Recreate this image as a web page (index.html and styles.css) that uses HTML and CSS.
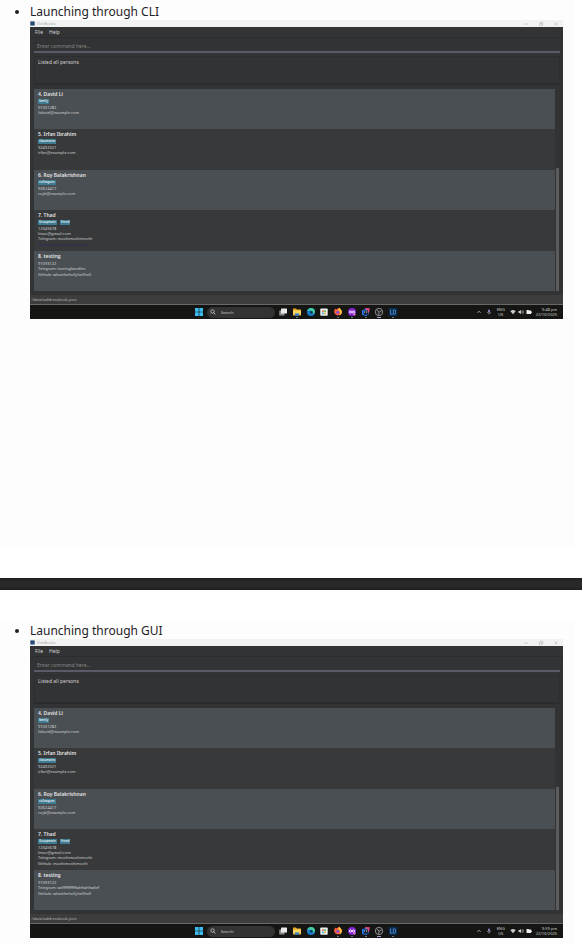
FILE: index.html
```html
<!DOCTYPE html>
<html lang="en">
<head>
<meta charset="utf-8">
<meta name="viewport" content="width=device-width, initial-scale=1">
<title>Launching</title>
<link rel="stylesheet" href="styles.css">
</head>
<body>
<svg class="sprite" aria-hidden="true">
  <symbol id="windows" viewBox="0 0 8 8"><path fill="#3cbcf0" d="M0 0h3.7v3.7H0zM4.3 0H8v3.7H4.3zM0 4.3h3.7V8H0zM4.3 4.3H8V8H4.3z"/></symbol>
  <symbol id="lens" viewBox="0 0 6 6"><circle cx="2.5" cy="2.5" r="1.7" fill="none" stroke="#ddd" stroke-width=".7"/><path d="M3.7 3.7L5.4 5.4" stroke="#ddd" stroke-width=".8"/></symbol>
  <symbol id="tasks" viewBox="0 0 10 10"><rect x="1.2" y="3.4" width="5.4" height="5" rx=".5" fill="#8b8b8b"/><rect x="3" y="1.4" width="6" height="5" rx=".5" fill="#e9e9e9"/></symbol>
  <symbol id="folder" viewBox="0 0 10 10"><path fill="#e9a820" d="M1 1.6h3l1 1h4v6H1z"/><path fill="#ffd561" d="M1 3.5h8v4H1z"/><path fill="#2c83d0" d="M2.8 6.4h4.4v2.2H2.8z"/></symbol>
  <symbol id="edge" viewBox="0 0 10 10"><circle cx="5" cy="5" r="4" fill="#1679c9"/><path fill="#43cfa0" d="M1.2 4.4C1.8 2 3.3 1 5 1c2.400 0 4 1.600 4 3.600C9 6 8 6.800 6.600 6.600 7 4.800 5.600 3.400 4 3.400c-1.200 0-2.200.4-2.800 1z"/><circle cx="5.5" cy="5.300" r="1.300" fill="#123450"/></symbol>
  <symbol id="store" viewBox="0 0 10 10"><rect x="1.300" y="1.500" width="7.400" height="7.300" rx=".8" fill="#ecf0ef"/><path fill="#e77748" d="M3 3.300h1.800v1.800H3z"/><path fill="#65b66f" d="M5.200 3.300H7v1.800H5.200z"/><path fill="#4aa7df" d="M3 5.500h1.800v1.800H3z"/><path fill="#e5bd47" d="M5.200 5.500H7v1.800H5.200z"/></symbol>
  <symbol id="firefox" viewBox="0 0 10 10"><path fill="#ff603b" d="M1.400 3l1-1.500.7 1L5 1.400 6.200.8C7 2 8.800 2.800 8.900 5A3.900 3.900 0 1 1 1.400 3z"/><path fill="#ffc33c" d="M6.200.8C7 2 8.800 2.800 8.900 5c0 1.500-.9 2.700-2.100 3.400C7.600 6 6.800 4 5 3z"/><circle cx="4.800" cy="5.300" r="1.600" fill="#8850c5"/></symbol>
  <symbol id="purple" viewBox="0 0 10 10"><circle cx="5" cy="5" r="4" fill="#8525d5"/><path fill="none" stroke="#fff" stroke-width=".9" d="M5 5C4 3.500 2.400 3.600 2.400 5S4 6.500 5 5s2.600-1.500 2.600 0S6 6.500 5 5"/><circle cx="7.400" cy="7.400" r="1.100" fill="#ef82c7"/></symbol>
  <symbol id="idea" viewBox="0 0 10 10"><path fill="#e54886" d="M4 1l4.800.3L8 6 5 5z"/><path fill="#227cf0" d="M1 3.300L5 2l3 5-2.500 2L1 8z"/><path fill="#111827" d="M2.700 3.500H7v4.200H2.700z"/><path stroke="#d6e6ff" stroke-width=".6" d="M3.500 4.200v1.700M4.800 4.200h1v1.700h-1"/></symbol>
  <symbol id="obs" viewBox="0 0 10 10"><circle cx="5" cy="5" r="3.700" fill="#202020" stroke="#b4b4b4" stroke-width=".7"/><path fill="none" stroke="#b4b4b4" stroke-width=".7" d="M5 5.200L3 2.800M5 5.200l2.700-1.500M5 5.200L4.600 8.200"/></symbol>
  <symbol id="devbooks" viewBox="0 0 10 10"><rect x=".8" y="1" width="8.400" height="8" fill="#092a51"/><path fill="none" stroke="#5998d2" stroke-width=".8" d="M2.600 2.500v4.700h2M5.300 2.800h1.200q1 0 1 1v2.400q0 1-1 1H5.300z"/></symbol>
  <symbol id="chevron" viewBox="0 0 6 6"><path fill="none" stroke="#ccc" stroke-width=".7" d="M1.300 3.700L3 2.300l1.700 1.400"/></symbol>
  <symbol id="mic" viewBox="0 0 6 6"><rect x="2.100" y=".6" width="1.800" height="3" rx=".9" fill="#8e91cf"/><path fill="none" stroke="#bbb" stroke-width=".5" d="M1.300 2.800q.2 1.700 1.700 1.700t1.700-1.700M3 4.500v1"/></symbol>
  <symbol id="wifi" viewBox="0 0 6 6"><path fill="#ccc" d="M.4 2.200Q3-.1 5.600 2.200L3 5.300z"/></symbol>
  <symbol id="sound" viewBox="0 0 6 6"><path fill="#ccc" d="M.5 2.100h1L3 .9v4.200L1.500 3.900h-1z"/><path fill="none" stroke="#ccc" stroke-width=".6" d="M3.800 1.900q.9 1.100 0 2.200M4.700 1q1.500 2 0 4"/></symbol>
  <symbol id="battery" viewBox="0 0 6 6"><path fill="#eee" d="M.5 1h2l.6.6h2v.9h.7v1.600h-.7V5H.5z"/></symbol>
  <symbol id="minimise" viewBox="0 0 6 6"><path stroke="#aaa" stroke-width=".5" d="M1 3h4"/></symbol>
  <symbol id="restore" viewBox="0 0 6 6"><path fill="none" stroke="#aaa" stroke-width=".5" d="M1.500 2.300h2.400v2.400H1.500zM2.300 2.200v-.9h2.500v2.500H4"/></symbol>
  <symbol id="close" viewBox="0 0 6 6"><path stroke="#aaa" stroke-width=".5" d="M1.500 1.500l3 3M4.500 1.500l-3 3"/></symbol>
</svg>

<main>
<section class="sheet">
  <ul class="steps"><li>Launching through CLI
    <div class="desktop">
      <header class="titlebar"><svg class="logo"><use href="#devbooks"/></svg><span>DevBooks</span>
        <div class="window-buttons"><button aria-label="Minimise"><svg><use href="#minimise"/></svg></button><button aria-label="Restore"><svg><use href="#restore"/></svg></button><button aria-label="Close"><svg><use href="#close"/></svg></button></div>
      </header>
      <nav class="menu"><button>File</button><button>Help</button></nav>
      <div class="command"><input type="text" aria-label="Command" placeholder="Enter command here..."></div>
      <div class="result">Listed all persons</div>
      <div class="list">
        <div class="people">
          <article><h2>4. David Li</h2><div class="tags"><span>family</span></div><p>91031282</p><p>lidavid@example.com</p></article>
          <article><h2>5. Irfan Ibrahim</h2><div class="tags"><span>classmates</span></div><p>92492021</p><p>irfan@example.com</p></article>
          <article><h2>6. Roy Balakrishnan</h2><div class="tags"><span>colleagues</span></div><p>92624417</p><p>royb@example.com</p></article>
          <article><h2>7. Thad</h2><div class="tags"><span>Groupmate</span><span>friend</span></div><p>12345678</p><p>lmao@gmail.com</p><p class="handle">Telegram: moshimoshimochi</p><p class="handle visited">Github: moshimoshimochi</p></article>
          <article><h2>8. testing</h2><p>91093122</p><p class="handle">Telegram: testinghandles</p><p class="handle">Github: whatthehollyhellhell</p></article>
        </div>
        <div class="track"><div class="thumb"></div></div>
      </div>
      <footer class="status">.\data\addressbook.json</footer>
      <div class="taskbar">
        <div class="apps">
          <button class="start" aria-label="Start"><svg><use href="#windows"/></svg></button>
          <label class="search"><svg><use href="#lens"/></svg><input type="text" aria-label="Search" placeholder="Search"></label>
          <button aria-label="Task view"><svg><use href="#tasks"/></svg></button>
          <button class="open" aria-label="Files"><svg><use href="#folder"/></svg></button>
          <button aria-label="Edge"><svg><use href="#edge"/></svg></button>
          <button aria-label="Store"><svg><use href="#store"/></svg></button>
          <button class="open" aria-label="Firefox"><svg><use href="#firefox"/></svg></button>
          <button class="open" aria-label="Editor"><svg><use href="#purple"/></svg></button>
          <button class="open" aria-label="IDE"><svg><use href="#idea"/></svg></button>
          <button class="open active" aria-label="Recorder"><svg><use href="#obs"/></svg></button>
          <button class="open" aria-label="DevBooks"><svg><use href="#devbooks"/></svg></button>
        </div>
        <div class="tray"><svg><use href="#chevron"/></svg><svg><use href="#mic"/></svg><span class="language">ENG<br>US</span><div class="system"><svg><use href="#wifi"/></svg><svg><use href="#sound"/></svg><svg><use href="#battery"/></svg></div><time>9:48 pm<br>22/10/2025</time></div>
      </div>
    </div>
  </li></ul>
</section>
<div class="page-break"></div>
<section class="sheet last">
  <ul class="steps"><li>Launching through GUI
    <div class="desktop">
      <header class="titlebar"><svg class="logo"><use href="#devbooks"/></svg><span>DevBooks</span>
        <div class="window-buttons"><button aria-label="Minimise"><svg><use href="#minimise"/></svg></button><button aria-label="Restore"><svg><use href="#restore"/></svg></button><button aria-label="Close"><svg><use href="#close"/></svg></button></div>
      </header>
      <nav class="menu"><button>File</button><button>Help</button></nav>
      <div class="command"><input type="text" aria-label="Command" placeholder="Enter command here..."></div>
      <div class="result">Listed all persons</div>
      <div class="list">
        <div class="people">
          <article><h2>4. David Li</h2><div class="tags"><span>family</span></div><p>91031282</p><p>lidavid@example.com</p></article>
          <article><h2>5. Irfan Ibrahim</h2><div class="tags"><span>classmates</span></div><p>92492021</p><p>irfan@example.com</p></article>
          <article><h2>6. Roy Balakrishnan</h2><div class="tags"><span>colleagues</span></div><p>92624417</p><p>royb@example.com</p></article>
          <article><h2>7. Thad</h2><div class="tags"><span>Groupmate</span><span>friend</span></div><p>12345678</p><p>lmao@gmail.com</p><p class="handle">Telegram: moshimoshimochi</p><p class="handle">Github: moshimoshimochi</p></article>
          <article><h2>8. testing</h2><p>91093122</p><p class="handle">Telegram: wtffffffffffwhfwhfwdef</p><p class="handle">Github: whatthehollyhellhell</p></article>
        </div>
        <div class="track"><div class="thumb"></div></div>
      </div>
      <footer class="status">.\data\addressbook.json</footer>
      <div class="taskbar">
        <div class="apps">
          <button class="start" aria-label="Start"><svg><use href="#windows"/></svg></button>
          <label class="search"><svg><use href="#lens"/></svg><input type="text" aria-label="Search" placeholder="Search"></label>
          <button aria-label="Task view"><svg><use href="#tasks"/></svg></button>
          <button aria-label="Files"><svg><use href="#folder"/></svg></button>
          <button aria-label="Edge"><svg><use href="#edge"/></svg></button>
          <button aria-label="Store"><svg><use href="#store"/></svg></button>
          <button class="open" aria-label="Firefox"><svg><use href="#firefox"/></svg></button>
          <button class="open" aria-label="Editor"><svg><use href="#purple"/></svg></button>
          <button class="open" aria-label="IDE"><svg><use href="#idea"/></svg></button>
          <button class="open active" aria-label="Recorder"><svg><use href="#obs"/></svg></button>
          <button class="open" aria-label="DevBooks"><svg><use href="#devbooks"/></svg></button>
        </div>
        <div class="tray"><svg><use href="#chevron"/></svg><svg><use href="#mic"/></svg><span class="language">ENG<br>US</span><div class="system"><svg><use href="#wifi"/></svg><svg><use href="#sound"/></svg><svg><use href="#battery"/></svg></div><time>9:59 pm<br>22/10/2025</time></div>
      </div>
    </div>
  </li></ul>
</section>
</main>
</body>
</html>
```

FILE: styles.css
```css
* { box-sizing: border-box; }
body { margin: 0; background: #fff; color: #1d2125; font-family: "Noto Sans", "Open Sans", sans-serif; }
button, input { font: inherit; color: inherit; background: none; border: 0; padding: 0; margin: 0; outline: 0; }
svg { display: block; width: 6px; height: 6px; flex: none; }
.sprite { position: absolute; width: 0; height: 0; }

.sheet { margin-right: 8px; padding-bottom: 229px; background: #fdfdfd; }
.sheet.last { margin-top: 29px; padding-bottom: 6px; }
.page-break { height: 12px; margin-top: 30px; background: linear-gradient(#1d1d1d, #292929 3px, #292929 9px, #1d1d1d); }
.steps { margin: 0; padding: 3px 11px 0 30px; font-size: 12px; line-height: 17px; }

.desktop { background: #323334; color: #d0d1d2; font-size: 5px; line-height: 7px; }
.titlebar { display: flex; align-items: center; gap: 2px; height: 7px; background: #f2f2f2; color: #aaa; font-size: 4px; }
.titlebar .logo { width: 5px; height: 5px; }
.window-buttons { display: flex; gap: 9px; margin-left: auto; padding-right: 4px; }
.menu { display: flex; gap: 6px; height: 11px; padding: 0 5px; border-bottom: 1px solid #2b2c2d; align-items: center; }
.command { height: 18px; padding: 2px 3px 0 4px; }
.command input { display: block; width: 100%; height: 13px; padding: 0 3px; border-bottom: 2px solid #5a5b67; }
.command input::placeholder { color: #858688; opacity: 1; }
.result { height: 28px; margin: 0 3px 0 4px; padding: 2px 3px; border: 1px solid #2d2e2f; }
.list { display: flex; gap: 1px; margin: 0 4px; padding: 4px 0; border-top: 1px solid #292a2d; }
.people { flex: 1; display: grid; grid-template-rows: repeat(5, 1fr); min-height: 202px; }
.people article { padding: 2px 4px; font-size: 4px; line-height: 5px; background: #37393b; }
.people article:nth-child(odd) { background: #4a4f53; }
.people article:nth-child(even) { background: #37393b; }
.people h2 { margin: 0 0 1px; font-size: 5px; line-height: 7px; font-weight: 600; color: #e4e5e6; }
.people p { margin: 0; }
.people .handle { line-height: 6px; }
.people .visited { color: #30265f; }
.tags { display: flex; gap: 3px; height: 5px; margin-bottom: 1px; font-size: 3px; line-height: 5px; color: #e4edf0; font-weight: 600; }
.tags span { padding: 0 1px; background: #3c7b92; }
.track { display: flex; align-items: flex-end; width: 3px; }
.thumb { width: 100%; height: 61%; background: #5b5c5e; }
.status { height: 9px; padding: 0 1px; background: #3d3d3e; color: #b8b9ba; font-size: 4px; line-height: 9px; }

.taskbar { display: grid; grid-template-columns: 1fr 203px 1fr; align-items: center; height: 15px; border-top: 1px solid #696a68; background: #151613; color: #cfcfcf; }
.apps { grid-column: 2; display: flex; align-items: center; justify-content: space-between; }
.apps button, .apps button svg { display: block; width: 10px; height: 10px; }
.apps button { position: relative; }
.apps .start, .apps .start svg { width: 8px; height: 8px; }
.open::after { content: ""; position: absolute; left: 4px; bottom: -1px; width: 2px; height: 1px; background: #777; }
.open.active::after { left: 3px; width: 4px; background: #a2a0cc; }
.search { display: flex; align-items: center; gap: 5px; width: 68px; height: 11px; padding: 0 3px; border-radius: 6px; background: #333; font-size: 4px; }
.search input { flex: 1; min-width: 0; height: 7px; }
.search input::placeholder { color: #ccc; opacity: 1; }
.tray { grid-column: 3; display: flex; align-items: center; justify-content: flex-end; gap: 4px; padding-right: 6px; font-size: 4px; line-height: 5px; }
.system { display: flex; gap: 2px; }
.language { text-align: center; width: 10px; }
.tray time { text-align: right; }
```
